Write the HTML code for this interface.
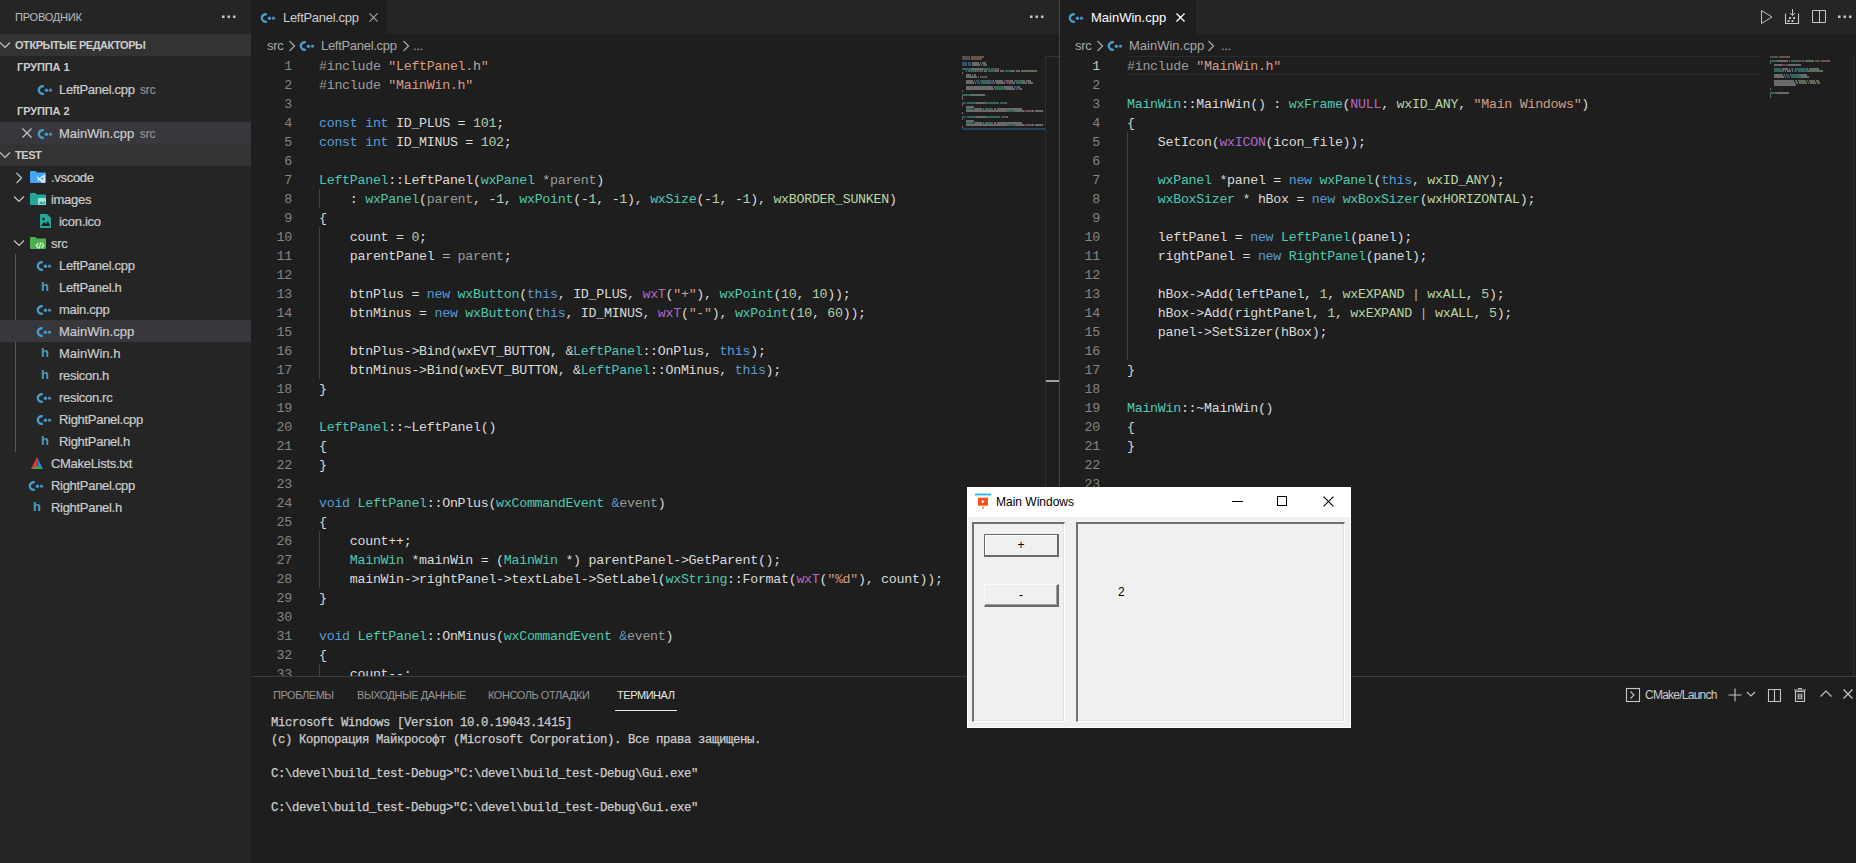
<!DOCTYPE html><html><head><meta charset="utf-8"><style>
*{margin:0;padding:0;box-sizing:border-box}
html,body{width:1856px;height:863px;overflow:hidden;background:#1e1e1e}
body{position:relative;font-family:"Liberation Sans",sans-serif}
.abs{position:absolute}
i{font-style:normal}
.ln{position:absolute;height:19px;padding-top:1px;line-height:19px;text-align:right;font-family:"Liberation Mono",monospace;font-size:13.3px;letter-spacing:-0.28px;color:#858585;white-space:pre}
.ln.act{color:#c6c6c6}
.cl{position:absolute;height:19px;padding-top:1px;line-height:19px;font-family:"Liberation Mono",monospace;font-size:13.3px;letter-spacing:-0.28px;color:#dadada;white-space:pre}
.guide{position:absolute;width:1px;background:#404040}
.p{color:#9b9b9b}.s{color:#d69d85}.t{color:#4ec9b0}.k{color:#569cd6}.m{color:#b368c8}.e{color:#b8d7a3}.a{color:#9a9a9a}.n{color:#b5cea8}.o{color:#b4b4b4}
.sbt{font-size:11px;color:#bbbbbb;line-height:14px;letter-spacing:-0.2px}
.sech{font-size:11px;font-weight:bold;color:#cccccc;line-height:22px;letter-spacing:-0.45px}
.grp{font-size:11px;font-weight:bold;color:#cccccc;line-height:22px;letter-spacing:-0.1px}
.fn{-webkit-text-stroke:0.2px currentColor;padding-top:1px;font-size:13px;color:#cccccc;line-height:22px;letter-spacing:-0.3px;white-space:pre}
.desc{font-size:12px;color:#8f8f8f;letter-spacing:-0.1px;margin-left:2px}
.hic{font-size:13px;font-weight:bold;color:#519aba;line-height:16px}
.dots{width:14px;height:3px}
.dots b{display:inline-block;width:2px;height:2px;background:#c5c5c5;margin-right:3px;vertical-align:top}
.tab{font-size:13px;line-height:16px;letter-spacing:-0.3px;white-space:pre}
.bc{font-size:13px;line-height:16px;color:#a9a9a9;letter-spacing:-0.3px;white-space:pre}
.ptab{font-size:11px;line-height:14px;letter-spacing:-0.45px;white-space:pre}
.term{font-family:"Liberation Mono",monospace;font-size:12.3px;letter-spacing:-0.38px;line-height:17px;color:#cccccc;white-space:pre;-webkit-text-stroke:0.25px currentColor}
.ptool{font-size:12px;line-height:16px;color:#cccccc;letter-spacing:-0.75px}
.mm{height:2px;opacity:0.42}
.wtitle{font-size:12px;line-height:14px;color:#000}
.sunk{border-top:2px solid #707070;border-left:2px solid #707070;border-bottom:1px solid #ffffff;border-right:1px solid #ffffff;box-shadow:inset -1px -1px 0 #e3e3e3}
.btn{background:#f0f0f0;font-size:12px;line-height:20px;text-align:center;color:#000}
.b1{border:1px solid #6a6a6a;border-right:2px solid #6a6a6a;border-bottom:2px solid #6a6a6a;box-shadow:inset 1px 1px 0 #ffffff}
.b2{border-top:1px solid #fafafa;border-left:1px solid #fafafa;border-right:2px solid #6a6a6a;border-bottom:2px solid #6a6a6a;box-shadow:inset -1px -1px 0 #a0a0a0}
.wlbl{font-size:12px;line-height:14px;color:#000}
</style></head><body>
<div class="abs" style="left:0;top:0;width:251px;height:863px;background:#252526"></div>
<div class="abs sbt" style="left:15px;top:10px">ПРОВОДНИК</div>
<svg class="abs" style="left:222px;top:15px" width="14" height="4" viewBox="0 0 14 4"><rect x="0" y="0.5" width="2.5" height="2.5" fill="#c5c5c5"/><rect x="5.5" y="0.5" width="2.5" height="2.5" fill="#c5c5c5"/><rect x="11" y="0.5" width="2.5" height="2.5" fill="#c5c5c5"/></svg>
<div class="abs" style="left:0;top:34px;width:251px;height:22px;background:#333334"></div>
<div class="abs" style="left:0;top:144px;width:251px;height:22px;background:#333334"></div>
<svg class="abs" style="left:-1px;top:40px" width="12" height="10" viewBox="0 0 12 10"><path d="M1 2.5L6 7.5L11 2.5" fill="none" stroke="#c5c5c5" stroke-width="1.2"/></svg>
<div class="abs sech" style="left:15px;top:34px">ОТКРЫТЫЕ РЕДАКТОРЫ</div>
<div class="abs grp" style="left:17px;top:56px">ГРУППА 1</div>
<svg class="abs" style="left:37px;top:84px" width="16" height="12" viewBox="0 0 16 12"><path d="M6.8 2.4A3.8 3.8 0 1 0 6.8 9.6" fill="none" stroke="#4a9cc8" stroke-width="2.4"/><circle cx="9.4" cy="6.2" r="1.7" fill="#3f9bd0"/><circle cx="13.5" cy="6.2" r="1.6" fill="#4d8fb8"/></svg>
<div class="abs fn" style="left:59px;top:78px">LeftPanel.cpp <span class="desc">src</span></div>
<div class="abs grp" style="left:17px;top:100px">ГРУППА 2</div>
<div class="abs" style="left:0;top:122px;width:251px;height:22px;background:#37373d"></div>
<svg class="abs" style="left:22px;top:128px" width="10" height="10" viewBox="0 0 10 10"><path d="M0.5 0.5L9.5 9.5M9.5 0.5L0.5 9.5" fill="none" stroke="#c5c5c5" stroke-width="1.2"/></svg>
<svg class="abs" style="left:37px;top:128px" width="16" height="12" viewBox="0 0 16 12"><path d="M6.8 2.4A3.8 3.8 0 1 0 6.8 9.6" fill="none" stroke="#4a9cc8" stroke-width="2.4"/><circle cx="9.4" cy="6.2" r="1.7" fill="#3f9bd0"/><circle cx="13.5" cy="6.2" r="1.6" fill="#4d8fb8"/></svg>
<div class="abs fn" style="left:59px;top:122px;letter-spacing:0">MainWin.cpp <span class="desc">src</span></div>
<svg class="abs" style="left:-1px;top:150px" width="12" height="10" viewBox="0 0 12 10"><path d="M1 2.5L6 7.5L11 2.5" fill="none" stroke="#c5c5c5" stroke-width="1.2"/></svg>
<div class="abs sech" style="left:15px;top:144px">TEST</div>
<svg class="abs" style="left:15px;top:172px" width="8" height="12" viewBox="0 0 8 12"><path d="M1.5 1L6.5 6L1.5 11" fill="none" stroke="#c5c5c5" stroke-width="1.2"/></svg>
<svg class="abs" style="left:30px;top:171px" width="16" height="12" viewBox="0 0 16 12"><path d="M0 1Q0 0 1 0H5.5L7 1.5H15Q16 1.5 16 2.5V11Q16 12 15 12H1Q0 12 0 11Z" fill="#42a5f5"/><path d="M7.5 6.2L11.5 9.8L14.2 8V11.8L11.5 10.2Z M7.5 9.8L11.5 6.2L14.2 4.4V8.2" fill="none" stroke="#e3f2fd" stroke-width="1.3" stroke-linejoin="round"/></svg>
<div class="abs fn" style="left:51px;top:166px">.vscode</div>
<svg class="abs" style="left:13px;top:194px" width="12" height="10" viewBox="0 0 12 10"><path d="M1 2.5L6 7.5L11 2.5" fill="none" stroke="#c5c5c5" stroke-width="1.2"/></svg>
<svg class="abs" style="left:30px;top:193px" width="16" height="12" viewBox="0 0 16 12"><path d="M0 1Q0 0 1 0H5.5L7 1.5H15Q16 1.5 16 2.5V11Q16 12 15 12H1Q0 12 0 11Z" fill="#26a69a"/><rect x="8" y="5" width="8" height="7" rx="1" fill="#9fe3da"/><path d="M9 11L11 8L13 10L15 8V11Z" fill="#26a69a"/></svg>
<div class="abs fn" style="left:51px;top:188px">images</div>
<svg class="abs" style="left:40px;top:214px" width="11" height="14" viewBox="0 0 11 14"><path d="M0 0H7L11 4V14H0Z" fill="#26a69a"/><circle cx="3.5" cy="5" r="1.3" fill="#1e1e1e"/><path d="M1 12L4 8L6 10L8 7L10 12Z" fill="#1e1e1e"/></svg>
<div class="abs fn" style="left:59px;top:210px">icon.ico</div>
<svg class="abs" style="left:13px;top:238px" width="12" height="10" viewBox="0 0 12 10"><path d="M1 2.5L6 7.5L11 2.5" fill="none" stroke="#c5c5c5" stroke-width="1.2"/></svg>
<svg class="abs" style="left:30px;top:237px" width="16" height="12" viewBox="0 0 16 12"><path d="M0 1Q0 0 1 0H5.5L7 1.5H15Q16 1.5 16 2.5V11Q16 12 15 12H1Q0 12 0 11Z" fill="#4caf50"/><path d="M8.3 6L6.3 8.5L8.3 11M11.7 6L13.7 8.5L11.7 11M10.8 5.3L9.2 11.7" stroke="#c8f7c5" stroke-width="1.3" fill="none"/></svg>
<div class="abs fn" style="left:51px;top:232px">src</div>
<div class="abs" style="left:15px;top:254px;width:1px;height:198px;background:#585858"></div>
<div class="abs" style="left:0;top:320px;width:251px;height:22px;background:#37373d"></div>
<svg class="abs" style="left:36px;top:260px" width="16" height="12" viewBox="0 0 16 12"><path d="M6.8 2.4A3.8 3.8 0 1 0 6.8 9.6" fill="none" stroke="#4a9cc8" stroke-width="2.4"/><circle cx="9.4" cy="6.2" r="1.7" fill="#3f9bd0"/><circle cx="13.5" cy="6.2" r="1.6" fill="#4d8fb8"/></svg>
<div class="abs fn" style="left:59px;top:254px">LeftPanel.cpp</div>
<div class="abs hic" style="left:41px;top:279px">h</div>
<div class="abs fn" style="left:59px;top:276px">LeftPanel.h</div>
<svg class="abs" style="left:36px;top:304px" width="16" height="12" viewBox="0 0 16 12"><path d="M6.8 2.4A3.8 3.8 0 1 0 6.8 9.6" fill="none" stroke="#4a9cc8" stroke-width="2.4"/><circle cx="9.4" cy="6.2" r="1.7" fill="#3f9bd0"/><circle cx="13.5" cy="6.2" r="1.6" fill="#4d8fb8"/></svg>
<div class="abs fn" style="left:59px;top:298px">main.cpp</div>
<svg class="abs" style="left:36px;top:326px" width="16" height="12" viewBox="0 0 16 12"><path d="M6.8 2.4A3.8 3.8 0 1 0 6.8 9.6" fill="none" stroke="#4a9cc8" stroke-width="2.4"/><circle cx="9.4" cy="6.2" r="1.7" fill="#3f9bd0"/><circle cx="13.5" cy="6.2" r="1.6" fill="#4d8fb8"/></svg>
<div class="abs fn" style="left:59px;top:320px;letter-spacing:0">MainWin.cpp</div>
<div class="abs hic" style="left:41px;top:345px">h</div>
<div class="abs fn" style="left:59px;top:342px;letter-spacing:0">MainWin.h</div>
<div class="abs hic" style="left:41px;top:367px">h</div>
<div class="abs fn" style="left:59px;top:364px">resicon.h</div>
<svg class="abs" style="left:36px;top:392px" width="16" height="12" viewBox="0 0 16 12"><path d="M6.8 2.4A3.8 3.8 0 1 0 6.8 9.6" fill="none" stroke="#4a9cc8" stroke-width="2.4"/><circle cx="9.4" cy="6.2" r="1.7" fill="#3f9bd0"/><circle cx="13.5" cy="6.2" r="1.6" fill="#4d8fb8"/></svg>
<div class="abs fn" style="left:59px;top:386px">resicon.rc</div>
<svg class="abs" style="left:36px;top:414px" width="16" height="12" viewBox="0 0 16 12"><path d="M6.8 2.4A3.8 3.8 0 1 0 6.8 9.6" fill="none" stroke="#4a9cc8" stroke-width="2.4"/><circle cx="9.4" cy="6.2" r="1.7" fill="#3f9bd0"/><circle cx="13.5" cy="6.2" r="1.6" fill="#4d8fb8"/></svg>
<div class="abs fn" style="left:59px;top:408px">RightPanel.cpp</div>
<div class="abs hic" style="left:41px;top:433px">h</div>
<div class="abs fn" style="left:59px;top:430px">RightPanel.h</div>
<svg class="abs" style="left:31px;top:457px" width="12" height="12" viewBox="0 0 12 12"><path d="M6 0L0 12H6Z" fill="#e53935"/><path d="M6 0L12 12H7Z" fill="#1e88e5"/><path d="M0 12L7 8.5L12 12Z" fill="#43a047"/></svg>
<div class="abs fn" style="left:51px;top:452px">CMakeLists.txt</div>
<svg class="abs" style="left:28px;top:480px" width="16" height="12" viewBox="0 0 16 12"><path d="M6.8 2.4A3.8 3.8 0 1 0 6.8 9.6" fill="none" stroke="#4a9cc8" stroke-width="2.4"/><circle cx="9.4" cy="6.2" r="1.7" fill="#3f9bd0"/><circle cx="13.5" cy="6.2" r="1.6" fill="#4d8fb8"/></svg>
<div class="abs fn" style="left:51px;top:474px">RightPanel.cpp</div>
<div class="abs hic" style="left:33px;top:499px">h</div>
<div class="abs fn" style="left:51px;top:496px">RightPanel.h</div>
<div class="abs" style="left:252px;top:0;width:807px;height:34px;background:#252526"></div>
<div class="abs" style="left:252px;top:0;width:134px;height:34px;background:#1e1e1e"></div>
<svg class="abs" style="left:260px;top:12px" width="16" height="12" viewBox="0 0 16 12"><path d="M6.8 2.4A3.8 3.8 0 1 0 6.8 9.6" fill="none" stroke="#4a9cc8" stroke-width="2.4"/><circle cx="9.4" cy="6.2" r="1.7" fill="#3f9bd0"/><circle cx="13.5" cy="6.2" r="1.6" fill="#4d8fb8"/></svg>
<div class="abs tab" style="left:283px;top:10px;color:#cccccc">LeftPanel.cpp</div>
<svg class="abs" style="left:369px;top:13px" width="9" height="9" viewBox="0 0 10 10"><path d="M0.5 0.5L9.5 9.5M9.5 0.5L0.5 9.5" fill="none" stroke="#a9a9a9" stroke-width="1.2"/></svg>
<svg class="abs" style="left:1030px;top:15px" width="14" height="4" viewBox="0 0 14 4"><rect x="0" y="0.5" width="2.5" height="2.5" fill="#c5c5c5"/><rect x="5.5" y="0.5" width="2.5" height="2.5" fill="#c5c5c5"/><rect x="11" y="0.5" width="2.5" height="2.5" fill="#c5c5c5"/></svg>
<div class="abs bc" style="left:267px;top:38px">src</div>
<svg class="abs" style="left:288px;top:40px" width="8" height="12" viewBox="0 0 8 12"><path d="M1.5 1L6.5 6L1.5 11" fill="none" stroke="#a9a9a9" stroke-width="1.2"/></svg>
<svg class="abs" style="left:299px;top:40px" width="16" height="12" viewBox="0 0 16 12"><path d="M6.8 2.4A3.8 3.8 0 1 0 6.8 9.6" fill="none" stroke="#4a9cc8" stroke-width="2.4"/><circle cx="9.4" cy="6.2" r="1.7" fill="#3f9bd0"/><circle cx="13.5" cy="6.2" r="1.6" fill="#4d8fb8"/></svg>
<div class="abs bc" style="left:321px;top:38px">LeftPanel.cpp</div>
<svg class="abs" style="left:402px;top:40px" width="8" height="12" viewBox="0 0 8 12"><path d="M1.5 1L6.5 6L1.5 11" fill="none" stroke="#a9a9a9" stroke-width="1.2"/></svg>
<div class="abs bc" style="left:413px;top:38px">...</div>
<div class="abs" style="left:252px;top:56px;width:807px;height:621px;overflow:hidden">
<div class="abs" style="left:-252px;top:-56px;width:1856px;height:863px">
<div class="ln" style="top:56px;left:252px;width:40px">1</div>
<div class="cl" style="top:56px;left:319px"><i class="p">#include</i> <i class="s">"LeftPanel.h"</i></div>
<div class="ln" style="top:75px;left:252px;width:40px">2</div>
<div class="cl" style="top:75px;left:319px"><i class="p">#include</i> <i class="s">"MainWin.h"</i></div>
<div class="ln" style="top:94px;left:252px;width:40px">3</div>
<div class="ln" style="top:113px;left:252px;width:40px">4</div>
<div class="cl" style="top:113px;left:319px"><i class="k">const</i> <i class="k">int</i> ID_PLUS = <i class="n">101</i>;</div>
<div class="ln" style="top:132px;left:252px;width:40px">5</div>
<div class="cl" style="top:132px;left:319px"><i class="k">const</i> <i class="k">int</i> ID_MINUS = <i class="n">102</i>;</div>
<div class="ln" style="top:151px;left:252px;width:40px">6</div>
<div class="ln" style="top:170px;left:252px;width:40px">7</div>
<div class="cl" style="top:170px;left:319px"><i class="t">LeftPanel</i>::LeftPanel(<i class="t">wxPanel</i> <i class="o">*</i><i class="a">parent</i>)</div>
<div class="ln" style="top:189px;left:252px;width:40px">8</div>
<div class="cl" style="top:189px;left:319px">    : <i class="t">wxPanel</i>(<i class="a">parent</i>, -<i class="n">1</i>, <i class="t">wxPoint</i>(-<i class="n">1</i>, -<i class="n">1</i>), <i class="t">wxSize</i>(-<i class="n">1</i>, -<i class="n">1</i>), <i class="e">wxBORDER_SUNKEN</i>)</div>
<div class="ln" style="top:208px;left:252px;width:40px">9</div>
<div class="cl" style="top:208px;left:319px">{</div>
<div class="ln" style="top:227px;left:252px;width:40px">10</div>
<div class="cl" style="top:227px;left:319px">    count = <i class="n">0</i>;</div>
<div class="ln" style="top:246px;left:252px;width:40px">11</div>
<div class="cl" style="top:246px;left:319px">    parentPanel <i class="o">=</i> <i class="a">parent</i>;</div>
<div class="ln" style="top:265px;left:252px;width:40px">12</div>
<div class="ln" style="top:284px;left:252px;width:40px">13</div>
<div class="cl" style="top:284px;left:319px">    btnPlus = <i class="k">new</i> <i class="t">wxButton</i>(<i class="k">this</i>, ID_PLUS, <i class="m">wxT</i>(<i class="s">"+"</i>), <i class="t">wxPoint</i>(<i class="n">10</i>, <i class="n">10</i>));</div>
<div class="ln" style="top:303px;left:252px;width:40px">14</div>
<div class="cl" style="top:303px;left:319px">    btnMinus = <i class="k">new</i> <i class="t">wxButton</i>(<i class="k">this</i>, ID_MINUS, <i class="m">wxT</i>(<i class="s">"-"</i>), <i class="t">wxPoint</i>(<i class="n">10</i>, <i class="n">60</i>));</div>
<div class="ln" style="top:322px;left:252px;width:40px">15</div>
<div class="ln" style="top:341px;left:252px;width:40px">16</div>
<div class="cl" style="top:341px;left:319px">    btnPlus-&gt;Bind(wxEVT_BUTTON, &amp;<i class="t">LeftPanel</i>::OnPlus, <i class="k">this</i>);</div>
<div class="ln" style="top:360px;left:252px;width:40px">17</div>
<div class="cl" style="top:360px;left:319px">    btnMinus-&gt;Bind(wxEVT_BUTTON, &amp;<i class="t">LeftPanel</i>::OnMinus, <i class="k">this</i>);</div>
<div class="ln" style="top:379px;left:252px;width:40px">18</div>
<div class="cl" style="top:379px;left:319px">}</div>
<div class="ln" style="top:398px;left:252px;width:40px">19</div>
<div class="ln" style="top:417px;left:252px;width:40px">20</div>
<div class="cl" style="top:417px;left:319px"><i class="t">LeftPanel</i>::~LeftPanel()</div>
<div class="ln" style="top:436px;left:252px;width:40px">21</div>
<div class="cl" style="top:436px;left:319px">{</div>
<div class="ln" style="top:455px;left:252px;width:40px">22</div>
<div class="cl" style="top:455px;left:319px">}</div>
<div class="ln" style="top:474px;left:252px;width:40px">23</div>
<div class="ln" style="top:493px;left:252px;width:40px">24</div>
<div class="cl" style="top:493px;left:319px"><i class="k">void</i> <i class="t">LeftPanel</i>::OnPlus(<i class="t">wxCommandEvent</i> <i class="k">&amp;</i><i class="a">event</i>)</div>
<div class="ln" style="top:512px;left:252px;width:40px">25</div>
<div class="cl" style="top:512px;left:319px">{</div>
<div class="ln" style="top:531px;left:252px;width:40px">26</div>
<div class="cl" style="top:531px;left:319px">    count++;</div>
<div class="ln" style="top:550px;left:252px;width:40px">27</div>
<div class="cl" style="top:550px;left:319px">    <i class="t">MainWin</i> *mainWin = (<i class="t">MainWin</i> *) parentPanel-&gt;GetParent();</div>
<div class="ln" style="top:569px;left:252px;width:40px">28</div>
<div class="cl" style="top:569px;left:319px">    mainWin-&gt;rightPanel-&gt;textLabel-&gt;SetLabel(<i class="t">wxString</i>::Format(<i class="m">wxT</i>(<i class="s">"%d"</i>), count));</div>
<div class="ln" style="top:588px;left:252px;width:40px">29</div>
<div class="cl" style="top:588px;left:319px">}</div>
<div class="ln" style="top:607px;left:252px;width:40px">30</div>
<div class="ln" style="top:626px;left:252px;width:40px">31</div>
<div class="cl" style="top:626px;left:319px"><i class="k">void</i> <i class="t">LeftPanel</i>::OnMinus(<i class="t">wxCommandEvent</i> <i class="k">&amp;</i><i class="a">event</i>)</div>
<div class="ln" style="top:645px;left:252px;width:40px">32</div>
<div class="cl" style="top:645px;left:319px">{</div>
<div class="ln" style="top:664px;left:252px;width:40px">33</div>
<div class="cl" style="top:664px;left:319px">    count--;</div>
<div class="guide" style="left:319px;top:189px;height:19px"></div>
<div class="guide" style="left:319px;top:227px;height:152px"></div>
<div class="guide" style="left:319px;top:531px;height:57px"></div>
<div class="guide" style="left:319px;top:664px;height:19px"></div>
</div></div>
<div class="abs" style="left:1045px;top:56px;width:1px;height:621px;background:#303030"></div>
<div class="abs" style="left:1045px;top:56px;width:14px;height:1px;background:#303030"></div>
<div class="abs" style="left:1046px;top:380px;width:13px;height:2px;background:#a0a0a0"></div>
<div class="abs mm" style="left:962px;top:56px;width:8px;background:#9b9b9b"></div>
<div class="abs mm" style="left:971px;top:56px;width:13px;background:#d69d85"></div>
<div class="abs mm" style="left:962px;top:58px;width:8px;background:#9b9b9b"></div>
<div class="abs mm" style="left:971px;top:58px;width:11px;background:#d69d85"></div>
<div class="abs mm" style="left:962px;top:62px;width:5px;background:#569cd6"></div>
<div class="abs mm" style="left:968px;top:62px;width:3px;background:#569cd6"></div>
<div class="abs mm" style="left:972px;top:62px;width:7px;background:#d4d4d4"></div>
<div class="abs mm" style="left:980px;top:62px;width:1px;background:#d4d4d4"></div>
<div class="abs mm" style="left:982px;top:62px;width:3px;background:#b5cea8"></div>
<div class="abs mm" style="left:985px;top:62px;width:1px;background:#d4d4d4"></div>
<div class="abs mm" style="left:962px;top:64px;width:5px;background:#569cd6"></div>
<div class="abs mm" style="left:968px;top:64px;width:3px;background:#569cd6"></div>
<div class="abs mm" style="left:972px;top:64px;width:8px;background:#d4d4d4"></div>
<div class="abs mm" style="left:981px;top:64px;width:1px;background:#d4d4d4"></div>
<div class="abs mm" style="left:983px;top:64px;width:3px;background:#b5cea8"></div>
<div class="abs mm" style="left:986px;top:64px;width:1px;background:#d4d4d4"></div>
<div class="abs mm" style="left:962px;top:68px;width:9px;background:#4ec9b0"></div>
<div class="abs mm" style="left:971px;top:68px;width:12px;background:#d4d4d4"></div>
<div class="abs mm" style="left:983px;top:68px;width:7px;background:#4ec9b0"></div>
<div class="abs mm" style="left:991px;top:68px;width:1px;background:#b4b4b4"></div>
<div class="abs mm" style="left:992px;top:68px;width:6px;background:#9a9a9a"></div>
<div class="abs mm" style="left:998px;top:68px;width:1px;background:#d4d4d4"></div>
<div class="abs mm" style="left:966px;top:70px;width:1px;background:#d4d4d4"></div>
<div class="abs mm" style="left:968px;top:70px;width:7px;background:#4ec9b0"></div>
<div class="abs mm" style="left:975px;top:70px;width:1px;background:#d4d4d4"></div>
<div class="abs mm" style="left:976px;top:70px;width:6px;background:#9a9a9a"></div>
<div class="abs mm" style="left:982px;top:70px;width:1px;background:#d4d4d4"></div>
<div class="abs mm" style="left:984px;top:70px;width:1px;background:#d4d4d4"></div>
<div class="abs mm" style="left:985px;top:70px;width:1px;background:#b5cea8"></div>
<div class="abs mm" style="left:986px;top:70px;width:1px;background:#d4d4d4"></div>
<div class="abs mm" style="left:988px;top:70px;width:7px;background:#4ec9b0"></div>
<div class="abs mm" style="left:995px;top:70px;width:2px;background:#d4d4d4"></div>
<div class="abs mm" style="left:997px;top:70px;width:1px;background:#b5cea8"></div>
<div class="abs mm" style="left:998px;top:70px;width:1px;background:#d4d4d4"></div>
<div class="abs mm" style="left:1000px;top:70px;width:1px;background:#d4d4d4"></div>
<div class="abs mm" style="left:1001px;top:70px;width:1px;background:#b5cea8"></div>
<div class="abs mm" style="left:1002px;top:70px;width:2px;background:#d4d4d4"></div>
<div class="abs mm" style="left:1005px;top:70px;width:6px;background:#4ec9b0"></div>
<div class="abs mm" style="left:1011px;top:70px;width:2px;background:#d4d4d4"></div>
<div class="abs mm" style="left:1013px;top:70px;width:1px;background:#b5cea8"></div>
<div class="abs mm" style="left:1014px;top:70px;width:1px;background:#d4d4d4"></div>
<div class="abs mm" style="left:1016px;top:70px;width:1px;background:#d4d4d4"></div>
<div class="abs mm" style="left:1017px;top:70px;width:1px;background:#b5cea8"></div>
<div class="abs mm" style="left:1018px;top:70px;width:2px;background:#d4d4d4"></div>
<div class="abs mm" style="left:1021px;top:70px;width:15px;background:#b8d7a3"></div>
<div class="abs mm" style="left:1036px;top:70px;width:1px;background:#d4d4d4"></div>
<div class="abs mm" style="left:962px;top:72px;width:1px;background:#d4d4d4"></div>
<div class="abs mm" style="left:966px;top:74px;width:5px;background:#d4d4d4"></div>
<div class="abs mm" style="left:972px;top:74px;width:1px;background:#d4d4d4"></div>
<div class="abs mm" style="left:974px;top:74px;width:1px;background:#b5cea8"></div>
<div class="abs mm" style="left:975px;top:74px;width:1px;background:#d4d4d4"></div>
<div class="abs mm" style="left:966px;top:76px;width:11px;background:#d4d4d4"></div>
<div class="abs mm" style="left:978px;top:76px;width:1px;background:#b4b4b4"></div>
<div class="abs mm" style="left:980px;top:76px;width:6px;background:#9a9a9a"></div>
<div class="abs mm" style="left:986px;top:76px;width:1px;background:#d4d4d4"></div>
<div class="abs mm" style="left:966px;top:80px;width:7px;background:#d4d4d4"></div>
<div class="abs mm" style="left:974px;top:80px;width:1px;background:#d4d4d4"></div>
<div class="abs mm" style="left:976px;top:80px;width:3px;background:#569cd6"></div>
<div class="abs mm" style="left:980px;top:80px;width:8px;background:#4ec9b0"></div>
<div class="abs mm" style="left:988px;top:80px;width:1px;background:#d4d4d4"></div>
<div class="abs mm" style="left:989px;top:80px;width:4px;background:#569cd6"></div>
<div class="abs mm" style="left:993px;top:80px;width:1px;background:#d4d4d4"></div>
<div class="abs mm" style="left:995px;top:80px;width:8px;background:#d4d4d4"></div>
<div class="abs mm" style="left:1004px;top:80px;width:3px;background:#b368c8"></div>
<div class="abs mm" style="left:1007px;top:80px;width:1px;background:#d4d4d4"></div>
<div class="abs mm" style="left:1008px;top:80px;width:3px;background:#d69d85"></div>
<div class="abs mm" style="left:1011px;top:80px;width:2px;background:#d4d4d4"></div>
<div class="abs mm" style="left:1014px;top:80px;width:7px;background:#4ec9b0"></div>
<div class="abs mm" style="left:1021px;top:80px;width:1px;background:#d4d4d4"></div>
<div class="abs mm" style="left:1022px;top:80px;width:2px;background:#b5cea8"></div>
<div class="abs mm" style="left:1024px;top:80px;width:1px;background:#d4d4d4"></div>
<div class="abs mm" style="left:1026px;top:80px;width:2px;background:#b5cea8"></div>
<div class="abs mm" style="left:1028px;top:80px;width:3px;background:#d4d4d4"></div>
<div class="abs mm" style="left:966px;top:82px;width:8px;background:#d4d4d4"></div>
<div class="abs mm" style="left:975px;top:82px;width:1px;background:#d4d4d4"></div>
<div class="abs mm" style="left:977px;top:82px;width:3px;background:#569cd6"></div>
<div class="abs mm" style="left:981px;top:82px;width:8px;background:#4ec9b0"></div>
<div class="abs mm" style="left:989px;top:82px;width:1px;background:#d4d4d4"></div>
<div class="abs mm" style="left:990px;top:82px;width:4px;background:#569cd6"></div>
<div class="abs mm" style="left:994px;top:82px;width:1px;background:#d4d4d4"></div>
<div class="abs mm" style="left:996px;top:82px;width:9px;background:#d4d4d4"></div>
<div class="abs mm" style="left:1006px;top:82px;width:3px;background:#b368c8"></div>
<div class="abs mm" style="left:1009px;top:82px;width:1px;background:#d4d4d4"></div>
<div class="abs mm" style="left:1010px;top:82px;width:3px;background:#d69d85"></div>
<div class="abs mm" style="left:1013px;top:82px;width:2px;background:#d4d4d4"></div>
<div class="abs mm" style="left:1016px;top:82px;width:7px;background:#4ec9b0"></div>
<div class="abs mm" style="left:1023px;top:82px;width:1px;background:#d4d4d4"></div>
<div class="abs mm" style="left:1024px;top:82px;width:2px;background:#b5cea8"></div>
<div class="abs mm" style="left:1026px;top:82px;width:1px;background:#d4d4d4"></div>
<div class="abs mm" style="left:1028px;top:82px;width:2px;background:#b5cea8"></div>
<div class="abs mm" style="left:1030px;top:82px;width:3px;background:#d4d4d4"></div>
<div class="abs mm" style="left:966px;top:86px;width:27px;background:#d4d4d4"></div>
<div class="abs mm" style="left:994px;top:86px;width:1px;background:#d4d4d4"></div>
<div class="abs mm" style="left:995px;top:86px;width:9px;background:#4ec9b0"></div>
<div class="abs mm" style="left:1004px;top:86px;width:9px;background:#d4d4d4"></div>
<div class="abs mm" style="left:1014px;top:86px;width:4px;background:#569cd6"></div>
<div class="abs mm" style="left:1018px;top:86px;width:2px;background:#d4d4d4"></div>
<div class="abs mm" style="left:966px;top:88px;width:28px;background:#d4d4d4"></div>
<div class="abs mm" style="left:995px;top:88px;width:1px;background:#d4d4d4"></div>
<div class="abs mm" style="left:996px;top:88px;width:9px;background:#4ec9b0"></div>
<div class="abs mm" style="left:1005px;top:88px;width:10px;background:#d4d4d4"></div>
<div class="abs mm" style="left:1016px;top:88px;width:4px;background:#569cd6"></div>
<div class="abs mm" style="left:1020px;top:88px;width:2px;background:#d4d4d4"></div>
<div class="abs mm" style="left:962px;top:90px;width:1px;background:#d4d4d4"></div>
<div class="abs mm" style="left:962px;top:94px;width:9px;background:#4ec9b0"></div>
<div class="abs mm" style="left:971px;top:94px;width:14px;background:#d4d4d4"></div>
<div class="abs mm" style="left:962px;top:96px;width:1px;background:#d4d4d4"></div>
<div class="abs mm" style="left:962px;top:98px;width:1px;background:#d4d4d4"></div>
<div class="abs mm" style="left:962px;top:102px;width:4px;background:#569cd6"></div>
<div class="abs mm" style="left:967px;top:102px;width:9px;background:#4ec9b0"></div>
<div class="abs mm" style="left:976px;top:102px;width:9px;background:#d4d4d4"></div>
<div class="abs mm" style="left:985px;top:102px;width:14px;background:#4ec9b0"></div>
<div class="abs mm" style="left:1000px;top:102px;width:1px;background:#569cd6"></div>
<div class="abs mm" style="left:1001px;top:102px;width:5px;background:#9a9a9a"></div>
<div class="abs mm" style="left:1006px;top:102px;width:1px;background:#d4d4d4"></div>
<div class="abs mm" style="left:962px;top:104px;width:1px;background:#d4d4d4"></div>
<div class="abs mm" style="left:966px;top:106px;width:8px;background:#d4d4d4"></div>
<div class="abs mm" style="left:966px;top:108px;width:7px;background:#4ec9b0"></div>
<div class="abs mm" style="left:974px;top:108px;width:8px;background:#d4d4d4"></div>
<div class="abs mm" style="left:983px;top:108px;width:1px;background:#d4d4d4"></div>
<div class="abs mm" style="left:985px;top:108px;width:1px;background:#d4d4d4"></div>
<div class="abs mm" style="left:986px;top:108px;width:7px;background:#4ec9b0"></div>
<div class="abs mm" style="left:994px;top:108px;width:2px;background:#d4d4d4"></div>
<div class="abs mm" style="left:997px;top:108px;width:25px;background:#d4d4d4"></div>
<div class="abs mm" style="left:966px;top:110px;width:41px;background:#d4d4d4"></div>
<div class="abs mm" style="left:1007px;top:110px;width:8px;background:#4ec9b0"></div>
<div class="abs mm" style="left:1015px;top:110px;width:9px;background:#d4d4d4"></div>
<div class="abs mm" style="left:1024px;top:110px;width:3px;background:#b368c8"></div>
<div class="abs mm" style="left:1027px;top:110px;width:1px;background:#d4d4d4"></div>
<div class="abs mm" style="left:1028px;top:110px;width:4px;background:#d69d85"></div>
<div class="abs mm" style="left:1032px;top:110px;width:2px;background:#d4d4d4"></div>
<div class="abs mm" style="left:1035px;top:110px;width:8px;background:#d4d4d4"></div>
<div class="abs mm" style="left:962px;top:112px;width:1px;background:#d4d4d4"></div>
<div class="abs mm" style="left:962px;top:116px;width:4px;background:#569cd6"></div>
<div class="abs mm" style="left:967px;top:116px;width:9px;background:#4ec9b0"></div>
<div class="abs mm" style="left:976px;top:116px;width:10px;background:#d4d4d4"></div>
<div class="abs mm" style="left:986px;top:116px;width:14px;background:#4ec9b0"></div>
<div class="abs mm" style="left:1001px;top:116px;width:1px;background:#569cd6"></div>
<div class="abs mm" style="left:1002px;top:116px;width:5px;background:#9a9a9a"></div>
<div class="abs mm" style="left:1007px;top:116px;width:1px;background:#d4d4d4"></div>
<div class="abs mm" style="left:962px;top:118px;width:1px;background:#d4d4d4"></div>
<div class="abs mm" style="left:966px;top:120px;width:8px;background:#d4d4d4"></div>
<div class="abs mm" style="left:966px;top:122px;width:7px;background:#4ec9b0"></div>
<div class="abs mm" style="left:974px;top:122px;width:8px;background:#d4d4d4"></div>
<div class="abs mm" style="left:983px;top:122px;width:1px;background:#d4d4d4"></div>
<div class="abs mm" style="left:985px;top:122px;width:1px;background:#d4d4d4"></div>
<div class="abs mm" style="left:986px;top:122px;width:7px;background:#4ec9b0"></div>
<div class="abs mm" style="left:994px;top:122px;width:2px;background:#d4d4d4"></div>
<div class="abs mm" style="left:997px;top:122px;width:25px;background:#d4d4d4"></div>
<div class="abs mm" style="left:966px;top:124px;width:41px;background:#d4d4d4"></div>
<div class="abs mm" style="left:1007px;top:124px;width:8px;background:#4ec9b0"></div>
<div class="abs mm" style="left:1015px;top:124px;width:9px;background:#d4d4d4"></div>
<div class="abs mm" style="left:1024px;top:124px;width:3px;background:#b368c8"></div>
<div class="abs mm" style="left:1027px;top:124px;width:1px;background:#d4d4d4"></div>
<div class="abs mm" style="left:1028px;top:124px;width:4px;background:#d69d85"></div>
<div class="abs mm" style="left:1032px;top:124px;width:2px;background:#d4d4d4"></div>
<div class="abs mm" style="left:1035px;top:124px;width:8px;background:#d4d4d4"></div>
<div class="abs mm" style="left:962px;top:126px;width:1px;background:#d4d4d4"></div>
<div class="abs" style="left:962px;top:128px;width:83px;height:2px;background:#23405e"></div>
<div class="abs" style="left:1059px;top:0;width:1px;height:677px;background:#444444"></div>
<div class="abs" style="left:1060px;top:0;width:796px;height:34px;background:#252526"></div>
<div class="abs" style="left:1060px;top:0;width:136px;height:34px;background:#1e1e1e"></div>
<svg class="abs" style="left:1068px;top:12px" width="16" height="12" viewBox="0 0 16 12"><path d="M6.8 2.4A3.8 3.8 0 1 0 6.8 9.6" fill="none" stroke="#4a9cc8" stroke-width="2.4"/><circle cx="9.4" cy="6.2" r="1.7" fill="#3f9bd0"/><circle cx="13.5" cy="6.2" r="1.6" fill="#4d8fb8"/></svg>
<div class="abs tab" style="left:1091px;top:10px;color:#ffffff;letter-spacing:0">MainWin.cpp</div>
<svg class="abs" style="left:1176px;top:13px" width="9" height="9" viewBox="0 0 10 10"><path d="M0.5 0.5L9.5 9.5M9.5 0.5L0.5 9.5" fill="none" stroke="#ffffff" stroke-width="1.5"/></svg>
<svg class="abs" style="left:1758px;top:8px" width="18" height="18" viewBox="0 0 18 18"><path d="M3.5 2.5V15.5L14 9Z" fill="none" stroke="#c5c5c5" stroke-width="1" stroke-linejoin="round"/></svg>
<svg class="abs" style="left:1783px;top:8px" width="18" height="18" viewBox="0 0 18 18"><path d="M2.5 5.5V15.5H15.5V5.5" fill="none" stroke="#c5c5c5" stroke-width="1.1"/><path d="M9.5 1V7.5M7 5L9.5 7.5L12 5" fill="none" stroke="#c5c5c5" stroke-width="1"/><rect x="6" y="9" width="2" height="2" fill="#c5c5c5"/><rect x="10" y="9" width="2" height="2" fill="#c5c5c5"/><rect x="4.5" y="12" width="2" height="2" fill="#c5c5c5"/><rect x="8.5" y="12" width="2" height="2" fill="#c5c5c5"/></svg>
<svg class="abs" style="left:1810px;top:8px" width="18" height="18" viewBox="0 0 18 18"><path d="M2.5 2.5H15.5V14.5H2.5Z M9.5 2.5V14.5" fill="none" stroke="#c5c5c5" stroke-width="1"/></svg>
<svg class="abs" style="left:1838px;top:15px" width="14" height="4" viewBox="0 0 14 4"><rect x="0" y="0.5" width="2.5" height="2.5" fill="#c5c5c5"/><rect x="5.5" y="0.5" width="2.5" height="2.5" fill="#c5c5c5"/><rect x="11" y="0.5" width="2.5" height="2.5" fill="#c5c5c5"/></svg>
<div class="abs bc" style="left:1075px;top:38px">src</div>
<svg class="abs" style="left:1096px;top:40px" width="8" height="12" viewBox="0 0 8 12"><path d="M1.5 1L6.5 6L1.5 11" fill="none" stroke="#a9a9a9" stroke-width="1.2"/></svg>
<svg class="abs" style="left:1107px;top:40px" width="16" height="12" viewBox="0 0 16 12"><path d="M6.8 2.4A3.8 3.8 0 1 0 6.8 9.6" fill="none" stroke="#4a9cc8" stroke-width="2.4"/><circle cx="9.4" cy="6.2" r="1.7" fill="#3f9bd0"/><circle cx="13.5" cy="6.2" r="1.6" fill="#4d8fb8"/></svg>
<div class="abs bc" style="left:1129px;top:38px;letter-spacing:0">MainWin.cpp</div>
<svg class="abs" style="left:1207px;top:40px" width="8" height="12" viewBox="0 0 8 12"><path d="M1.5 1L6.5 6L1.5 11" fill="none" stroke="#a9a9a9" stroke-width="1.2"/></svg>
<div class="abs bc" style="left:1221px;top:38px">...</div>
<div class="abs" style="left:1127px;top:56px;width:635px;height:19px;border:1px solid #2a2a2a;border-left:0;border-right:0"></div>
<div class="ln act" style="top:56px;left:1060px;width:40px">1</div>
<div class="cl" style="top:56px;left:1127px"><i class="p">#include</i> <i class="s">"MainWin.h"</i></div>
<div class="ln" style="top:75px;left:1060px;width:40px">2</div>
<div class="ln" style="top:94px;left:1060px;width:40px">3</div>
<div class="cl" style="top:94px;left:1127px"><i class="t">MainWin</i>::MainWin() : <i class="t">wxFrame</i>(<i class="m">NULL</i>, <i class="e">wxID_ANY</i>, <i class="s">"Main Windows"</i>)</div>
<div class="ln" style="top:113px;left:1060px;width:40px">4</div>
<div class="cl" style="top:113px;left:1127px">{</div>
<div class="ln" style="top:132px;left:1060px;width:40px">5</div>
<div class="cl" style="top:132px;left:1127px">    SetIcon(<i class="m">wxICON</i>(icon_file));</div>
<div class="ln" style="top:151px;left:1060px;width:40px">6</div>
<div class="ln" style="top:170px;left:1060px;width:40px">7</div>
<div class="cl" style="top:170px;left:1127px">    <i class="t">wxPanel</i> *panel = <i class="k">new</i> <i class="t">wxPanel</i>(<i class="k">this</i>, <i class="e">wxID_ANY</i>);</div>
<div class="ln" style="top:189px;left:1060px;width:40px">8</div>
<div class="cl" style="top:189px;left:1127px">    <i class="t">wxBoxSizer</i> * hBox = <i class="k">new</i> <i class="t">wxBoxSizer</i>(<i class="e">wxHORIZONTAL</i>);</div>
<div class="ln" style="top:208px;left:1060px;width:40px">9</div>
<div class="ln" style="top:227px;left:1060px;width:40px">10</div>
<div class="cl" style="top:227px;left:1127px">    leftPanel = <i class="k">new</i> <i class="t">LeftPanel</i>(panel);</div>
<div class="ln" style="top:246px;left:1060px;width:40px">11</div>
<div class="cl" style="top:246px;left:1127px">    rightPanel = <i class="k">new</i> <i class="t">RightPanel</i>(panel);</div>
<div class="ln" style="top:265px;left:1060px;width:40px">12</div>
<div class="ln" style="top:284px;left:1060px;width:40px">13</div>
<div class="cl" style="top:284px;left:1127px">    hBox-&gt;Add(leftPanel, <i class="n">1</i>, <i class="e">wxEXPAND</i> <i class="o">|</i> <i class="e">wxALL</i>, <i class="n">5</i>);</div>
<div class="ln" style="top:303px;left:1060px;width:40px">14</div>
<div class="cl" style="top:303px;left:1127px">    hBox-&gt;Add(rightPanel, <i class="n">1</i>, <i class="e">wxEXPAND</i> <i class="o">|</i> <i class="e">wxALL</i>, <i class="n">5</i>);</div>
<div class="ln" style="top:322px;left:1060px;width:40px">15</div>
<div class="cl" style="top:322px;left:1127px">    panel-&gt;SetSizer(hBox);</div>
<div class="ln" style="top:341px;left:1060px;width:40px">16</div>
<div class="ln" style="top:360px;left:1060px;width:40px">17</div>
<div class="cl" style="top:360px;left:1127px">}</div>
<div class="ln" style="top:379px;left:1060px;width:40px">18</div>
<div class="ln" style="top:398px;left:1060px;width:40px">19</div>
<div class="cl" style="top:398px;left:1127px"><i class="t">MainWin</i>::~MainWin()</div>
<div class="ln" style="top:417px;left:1060px;width:40px">20</div>
<div class="cl" style="top:417px;left:1127px">{</div>
<div class="ln" style="top:436px;left:1060px;width:40px">21</div>
<div class="cl" style="top:436px;left:1127px">}</div>
<div class="ln" style="top:455px;left:1060px;width:40px">22</div>
<div class="ln" style="top:474px;left:1060px;width:40px">23</div>
<div class="guide" style="left:1127px;top:132px;height:228px"></div>
<div class="abs" style="left:1853px;top:56px;width:1px;height:621px;background:#303030"></div>
<div class="abs mm" style="left:1770px;top:56px;width:8px;background:#9b9b9b"></div>
<div class="abs mm" style="left:1779px;top:56px;width:11px;background:#d69d85"></div>
<div class="abs mm" style="left:1770px;top:60px;width:7px;background:#4ec9b0"></div>
<div class="abs mm" style="left:1777px;top:60px;width:11px;background:#d4d4d4"></div>
<div class="abs mm" style="left:1789px;top:60px;width:1px;background:#d4d4d4"></div>
<div class="abs mm" style="left:1791px;top:60px;width:7px;background:#4ec9b0"></div>
<div class="abs mm" style="left:1798px;top:60px;width:1px;background:#d4d4d4"></div>
<div class="abs mm" style="left:1799px;top:60px;width:4px;background:#b368c8"></div>
<div class="abs mm" style="left:1803px;top:60px;width:1px;background:#d4d4d4"></div>
<div class="abs mm" style="left:1805px;top:60px;width:8px;background:#b8d7a3"></div>
<div class="abs mm" style="left:1813px;top:60px;width:1px;background:#d4d4d4"></div>
<div class="abs mm" style="left:1815px;top:60px;width:5px;background:#d69d85"></div>
<div class="abs mm" style="left:1821px;top:60px;width:8px;background:#d69d85"></div>
<div class="abs mm" style="left:1829px;top:60px;width:1px;background:#d4d4d4"></div>
<div class="abs mm" style="left:1770px;top:62px;width:1px;background:#d4d4d4"></div>
<div class="abs mm" style="left:1774px;top:64px;width:8px;background:#d4d4d4"></div>
<div class="abs mm" style="left:1782px;top:64px;width:6px;background:#b368c8"></div>
<div class="abs mm" style="left:1788px;top:64px;width:13px;background:#d4d4d4"></div>
<div class="abs mm" style="left:1774px;top:68px;width:7px;background:#4ec9b0"></div>
<div class="abs mm" style="left:1782px;top:68px;width:6px;background:#d4d4d4"></div>
<div class="abs mm" style="left:1789px;top:68px;width:1px;background:#d4d4d4"></div>
<div class="abs mm" style="left:1791px;top:68px;width:3px;background:#569cd6"></div>
<div class="abs mm" style="left:1795px;top:68px;width:7px;background:#4ec9b0"></div>
<div class="abs mm" style="left:1802px;top:68px;width:1px;background:#d4d4d4"></div>
<div class="abs mm" style="left:1803px;top:68px;width:4px;background:#569cd6"></div>
<div class="abs mm" style="left:1807px;top:68px;width:1px;background:#d4d4d4"></div>
<div class="abs mm" style="left:1809px;top:68px;width:8px;background:#b8d7a3"></div>
<div class="abs mm" style="left:1817px;top:68px;width:2px;background:#d4d4d4"></div>
<div class="abs mm" style="left:1774px;top:70px;width:10px;background:#4ec9b0"></div>
<div class="abs mm" style="left:1785px;top:70px;width:1px;background:#d4d4d4"></div>
<div class="abs mm" style="left:1787px;top:70px;width:4px;background:#d4d4d4"></div>
<div class="abs mm" style="left:1792px;top:70px;width:1px;background:#d4d4d4"></div>
<div class="abs mm" style="left:1794px;top:70px;width:3px;background:#569cd6"></div>
<div class="abs mm" style="left:1798px;top:70px;width:10px;background:#4ec9b0"></div>
<div class="abs mm" style="left:1808px;top:70px;width:1px;background:#d4d4d4"></div>
<div class="abs mm" style="left:1809px;top:70px;width:12px;background:#b8d7a3"></div>
<div class="abs mm" style="left:1821px;top:70px;width:2px;background:#d4d4d4"></div>
<div class="abs mm" style="left:1774px;top:74px;width:9px;background:#d4d4d4"></div>
<div class="abs mm" style="left:1784px;top:74px;width:1px;background:#d4d4d4"></div>
<div class="abs mm" style="left:1786px;top:74px;width:3px;background:#569cd6"></div>
<div class="abs mm" style="left:1790px;top:74px;width:9px;background:#4ec9b0"></div>
<div class="abs mm" style="left:1799px;top:74px;width:8px;background:#d4d4d4"></div>
<div class="abs mm" style="left:1774px;top:76px;width:10px;background:#d4d4d4"></div>
<div class="abs mm" style="left:1785px;top:76px;width:1px;background:#d4d4d4"></div>
<div class="abs mm" style="left:1787px;top:76px;width:3px;background:#569cd6"></div>
<div class="abs mm" style="left:1791px;top:76px;width:10px;background:#4ec9b0"></div>
<div class="abs mm" style="left:1801px;top:76px;width:8px;background:#d4d4d4"></div>
<div class="abs mm" style="left:1774px;top:80px;width:20px;background:#d4d4d4"></div>
<div class="abs mm" style="left:1795px;top:80px;width:1px;background:#b5cea8"></div>
<div class="abs mm" style="left:1796px;top:80px;width:1px;background:#d4d4d4"></div>
<div class="abs mm" style="left:1798px;top:80px;width:8px;background:#b8d7a3"></div>
<div class="abs mm" style="left:1807px;top:80px;width:1px;background:#b4b4b4"></div>
<div class="abs mm" style="left:1809px;top:80px;width:5px;background:#b8d7a3"></div>
<div class="abs mm" style="left:1814px;top:80px;width:1px;background:#d4d4d4"></div>
<div class="abs mm" style="left:1816px;top:80px;width:1px;background:#b5cea8"></div>
<div class="abs mm" style="left:1817px;top:80px;width:2px;background:#d4d4d4"></div>
<div class="abs mm" style="left:1774px;top:82px;width:21px;background:#d4d4d4"></div>
<div class="abs mm" style="left:1796px;top:82px;width:1px;background:#b5cea8"></div>
<div class="abs mm" style="left:1797px;top:82px;width:1px;background:#d4d4d4"></div>
<div class="abs mm" style="left:1799px;top:82px;width:8px;background:#b8d7a3"></div>
<div class="abs mm" style="left:1808px;top:82px;width:1px;background:#b4b4b4"></div>
<div class="abs mm" style="left:1810px;top:82px;width:5px;background:#b8d7a3"></div>
<div class="abs mm" style="left:1815px;top:82px;width:1px;background:#d4d4d4"></div>
<div class="abs mm" style="left:1817px;top:82px;width:1px;background:#b5cea8"></div>
<div class="abs mm" style="left:1818px;top:82px;width:2px;background:#d4d4d4"></div>
<div class="abs mm" style="left:1774px;top:84px;width:22px;background:#d4d4d4"></div>
<div class="abs mm" style="left:1770px;top:88px;width:1px;background:#d4d4d4"></div>
<div class="abs mm" style="left:1770px;top:92px;width:7px;background:#4ec9b0"></div>
<div class="abs mm" style="left:1777px;top:92px;width:12px;background:#d4d4d4"></div>
<div class="abs mm" style="left:1770px;top:94px;width:1px;background:#d4d4d4"></div>
<div class="abs mm" style="left:1770px;top:96px;width:1px;background:#d4d4d4"></div>
<div class="abs" style="left:252px;top:677px;width:1604px;height:186px;background:#1e1e1e"></div>
<div class="abs" style="left:252px;top:676px;width:1604px;height:1px;background:#3c3c3c"></div>
<div class="abs ptab" style="left:273px;top:688px;color:#969696">ПРОБЛЕМЫ</div>
<div class="abs ptab" style="left:357px;top:688px;color:#969696">ВЫХОДНЫЕ ДАННЫЕ</div>
<div class="abs ptab" style="left:488px;top:688px;color:#969696">КОНСОЛЬ ОТЛАДКИ</div>
<div class="abs ptab" style="left:617px;top:688px;color:#e7e7e7">ТЕРМИНАЛ</div>
<div class="abs" style="left:615px;top:710px;width:62px;height:1px;background:#e7e7e7"></div>
<div class="abs term" style="left:271px;top:715px">Microsoft Windows [Version 10.0.19043.1415]</div>
<div class="abs term" style="left:271px;top:732px">(c) Корпорация Майкрософт (Microsoft Corporation). Все права защищены.</div>
<div class="abs term" style="left:271px;top:766px">C:\devel\build_test-Debug&gt;"C:\devel\build_test-Debug\Gui.exe"</div>
<div class="abs term" style="left:271px;top:800px">C:\devel\build_test-Debug&gt;"C:\devel\build_test-Debug\Gui.exe"</div>
<svg class="abs" style="left:1625px;top:687px" width="16" height="16" viewBox="0 0 16 16"><rect x="1.5" y="1.5" width="13" height="13" fill="none" stroke="#c5c5c5" stroke-width="1.1"/><path d="M5.5 4.5L9 8L5.5 11.5" fill="none" stroke="#c5c5c5" stroke-width="1.1"/></svg>
<div class="abs ptool" style="left:1645px;top:687px">CMake/Launch</div>
<svg class="abs" style="left:1727px;top:687px" width="16" height="16" viewBox="0 0 16 16"><path d="M8 1.5V14.5M1.5 8H14.5" fill="none" stroke="#c5c5c5" stroke-width="1.1"/></svg>
<svg class="abs" style="left:1746px;top:690px" width="10" height="8" viewBox="0 0 10 8"><path d="M1 2L5 6L9 2" fill="none" stroke="#c5c5c5" stroke-width="1.1"/></svg>
<svg class="abs" style="left:1766px;top:687px" width="16" height="16" viewBox="0 0 16 16"><path d="M2.5 2.5H14.5V14.5H2.5Z M8.5 2.5V14.5" fill="none" stroke="#c5c5c5" stroke-width="1.1"/></svg>
<svg class="abs" style="left:1792px;top:687px" width="16" height="16" viewBox="0 0 16 16"><path d="M3.5 4.5H12.5V14.5H3.5Z M2 3H14 M6 1.5H10 M6.2 6.5V12.5 M8 6.5V12.5 M9.8 6.5V12.5" fill="none" stroke="#c5c5c5" stroke-width="1.1"/></svg>
<svg class="abs" style="left:1819px;top:689px" width="14" height="10" viewBox="0 0 14 10"><path d="M1.5 7.5L7 2L12.5 7.5" fill="none" stroke="#c5c5c5" stroke-width="1.2"/></svg>
<svg class="abs" style="left:1843px;top:689px" width="10" height="10" viewBox="0 0 10 10"><path d="M0.5 0.5L9.5 9.5M9.5 0.5L0.5 9.5" fill="none" stroke="#c5c5c5" stroke-width="1.2"/></svg>
<div class="abs" style="left:967px;top:487px;width:384px;height:241px;background:#f0f0f0;overflow:hidden">
<div class="abs" style="left:0;top:0;width:384px;height:30px;background:#ffffff"></div>
<svg class="abs" style="left:8px;top:6px" width="16" height="16" viewBox="0 0 16 16"><rect x="0" y="0.6" width="16" height="1.8" fill="#29b6f6"/><rect x="3" y="4.7" width="10" height="8" fill="#f4511e"/><path d="M6.8 6.8V10.6L9.6 8.7Z" fill="#fff"/><rect x="7.3" y="13.8" width="1.4" height="1.8" fill="#f4511e"/></svg>
<div class="abs wtitle" style="left:29px;top:8px">Main Windows</div>
<div class="abs" style="left:265px;top:14px;width:11px;height:1px;background:#000"></div>
<div class="abs" style="left:310px;top:9px;width:10px;height:10px;border:1px solid #000"></div>
<svg class="abs" style="left:356px;top:9px" width="11" height="11" viewBox="0 0 10 10"><path d="M0.5 0.5L9.5 9.5M9.5 0.5L0.5 9.5" fill="none" stroke="#000" stroke-width="1.0"/></svg>
<div class="abs sunk" style="left:5px;top:35px;width:93px;height:200px"></div>
<div class="abs sunk" style="left:109px;top:35px;width:269px;height:200px"></div>
<div class="abs btn b1" style="left:17px;top:47px;width:75px;height:23px">+</div>
<div class="abs btn b2" style="left:17px;top:97px;width:75px;height:23px">-</div>
<div class="abs wlbl" style="left:151px;top:98px">2</div>
<div class="abs" style="left:0;top:0;width:384px;height:241px;border:1px solid #ffffff;border-top:0"></div>
</div>
</body></html>
